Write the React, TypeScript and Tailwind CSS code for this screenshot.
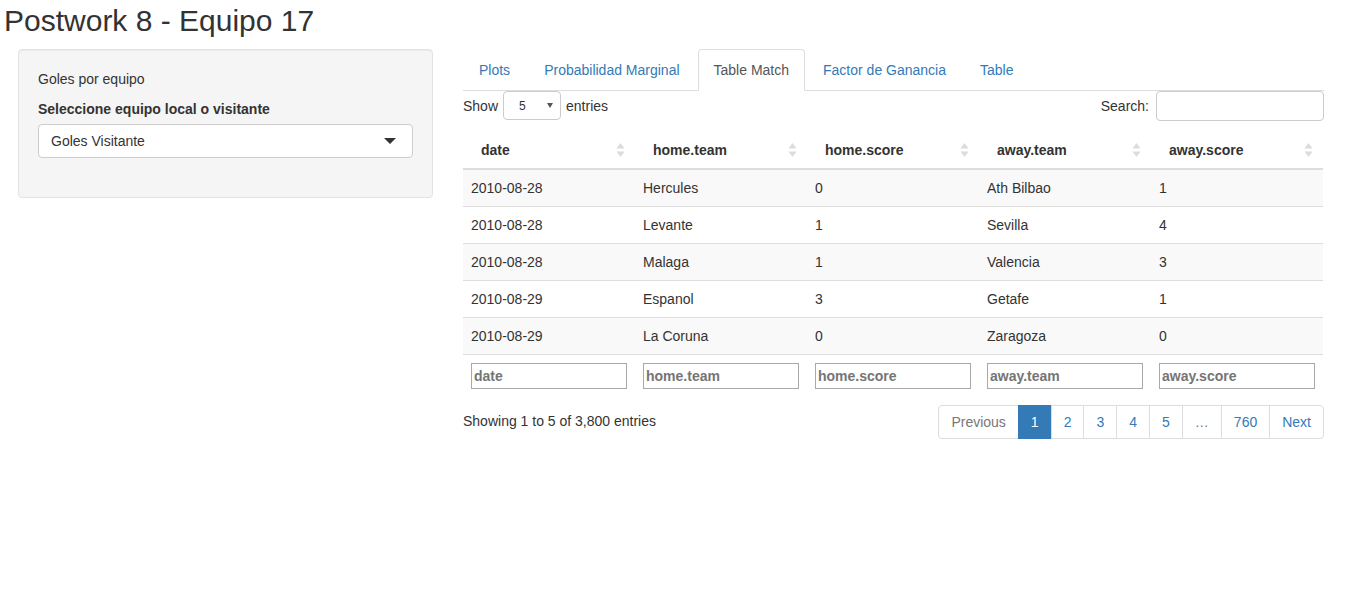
import React from "react";

const rows = [
  ["2010-08-28", "Hercules", "0", "Ath Bilbao", "1"],
  ["2010-08-28", "Levante", "1", "Sevilla", "4"],
  ["2010-08-28", "Malaga", "1", "Valencia", "3"],
  ["2010-08-29", "Espanol", "3", "Getafe", "1"],
  ["2010-08-29", "La Coruna", "0", "Zaragoza", "0"],
];
const cols = ["date", "home.team", "home.score", "away.team", "away.score"];
const tabs = ["Plots", "Probabilidad Marginal", "Table Match", "Factor de Ganancia", "Table"];

function SortIcon() {
  return (
    <svg width="9" height="16" viewBox="0 0 9 16" className="shrink-0">
      <path d="M4.5 1 L8.5 6.5 L0.5 6.5 Z" fill="#dcdcdc" />
      <path d="M4.5 15 L8.5 9.5 L0.5 9.5 Z" fill="#dcdcdc" />
    </svg>
  );
}

export default function App() {
  return (
    <div
      className="w-[1351px] h-[606px] bg-white text-[#333] text-[14px] leading-[20px]"
      style={{ fontFamily: '"Liberation Sans", Arial, sans-serif' }}
    >
      <h2 className="pl-[4px] pt-[3px] text-[30px] leading-[36px] h-[49px] font-normal text-[#333]">
        Postwork 8 - Equipo 17
      </h2>
      <div className="flex items-start">
        {/* sidebar */}
        <div className="ml-[18px] w-[415px] h-[149px] rounded-[4px] border border-[#e3e3e3] bg-[#f5f5f5] p-[19px] shadow-[inset_0_1px_1px_rgba(0,0,0,0.05)]">
          <div>Goles por equipo</div>
          <div className="mt-[10px] font-bold">Seleccione equipo local o visitante</div>
          <div className="mt-[5px] h-[34px] rounded-[4px] border border-[#cccccc] bg-white flex items-center justify-between pl-[12px] pr-[16px]">
            <span>Goles Visitante</span>
            <span className="w-0 h-0 border-l-[6px] border-r-[6px] border-t-[6px] border-l-transparent border-r-transparent border-t-[#333]" />
          </div>
        </div>
        {/* main */}
        <div className="ml-[30px] w-[861px]">
          <ul className="flex border-b border-[#dddddd] h-[42px]">
            {tabs.map((t) => {
              const active = t === "Table Match";
              return (
                <li key={t} className="mr-[2px]">
                  <div
                    className={
                      active
                        ? "px-[15px] py-[10px] border border-[#dddddd] border-b-white bg-white rounded-t-[4px] text-[#555] h-[42px]"
                        : "px-[15px] py-[10px] border border-transparent text-[#337ab7] h-[42px]"
                    }
                  >
                    {t}
                  </div>
                </li>
              );
            })}
          </ul>
          <div className="flex items-center justify-between h-[29px]">
            <div className="flex items-center">
              <span>Show</span>
              <div className="ml-[5px] w-[58px] h-[29px] border border-[#cccccc] rounded-[4px] flex items-center justify-between pl-[15px] pr-[7px] text-[12px]">
                <span>5</span>
                <span className="w-0 h-0 border-l-[3px] border-r-[3px] border-t-[5px] border-l-transparent border-r-transparent border-t-[#555]" />
              </div>
              <span className="ml-[5px]">entries</span>
            </div>
            <div className="flex items-center">
              <span>Search:</span>
              <div className="ml-[7px] w-[168px] h-[30px] border border-[#cccccc] rounded-[4px] bg-white" />
            </div>
          </div>
          <table className="mt-[11px] w-[860px] border-collapse table-fixed">
            <thead>
              <tr className="border-b-2 border-[#dddddd]">
                {cols.map((c) => (
                  <th key={c} className="h-[38px] pl-[18px] pr-[10px] text-left font-bold">
                    <div className="flex items-center justify-between">
                      <span>{c}</span>
                      <SortIcon />
                    </div>
                  </th>
                ))}
              </tr>
            </thead>
            <tbody>
              {rows.map((r, i) => (
                <tr key={i} className={(i % 2 === 0 ? "bg-[#f9f9f9]" : "bg-white") + " border-t border-[#dddddd]"}>
                  {r.map((v, j) => (
                    <td key={j} className="h-[37px] px-[8px]">
                      {v}
                    </td>
                  ))}
                </tr>
              ))}
            </tbody>
            <tfoot>
              <tr className="border-t border-[#dddddd]">
                {cols.map((c) => (
                  <th key={c} className="px-[8px] pt-[8px] pb-[8px] text-left">
                    <div className="w-[156px] h-[26px] border border-[#a9a9a9] flex items-center pl-[2px] text-[#757575] font-bold text-[14px]">
                      {c}
                    </div>
                  </th>
                ))}
              </tr>
            </tfoot>
          </table>
          <div className="flex justify-between items-start mt-[8px]">
            <div className="pt-[6px]">Showing 1 to 5 of 3,800 entries</div>
            <div className="flex h-[34px]">
              <div className="px-[12px] flex items-center border border-[#dddddd] rounded-l-[4px] text-[#777]">Previous</div>
              <div className="px-[12px] flex items-center border border-[#337ab7] bg-[#337ab7] text-white ml-[-1px]">1</div>
              {["2", "3", "4", "5"].map((p) => (
                <div key={p} className="px-[12px] flex items-center border border-[#dddddd] text-[#337ab7] ml-[-1px]">{p}</div>
              ))}
              <div className="px-[12px] flex items-center border border-[#dddddd] text-[#777] ml-[-1px]">…</div>
              <div className="px-[12px] flex items-center border border-[#dddddd] text-[#337ab7] ml-[-1px]">760</div>
              <div className="px-[12px] flex items-center border border-[#dddddd] rounded-r-[4px] text-[#337ab7] ml-[-1px]">Next</div>
            </div>
          </div>
        </div>
      </div>
    </div>
  );
}
